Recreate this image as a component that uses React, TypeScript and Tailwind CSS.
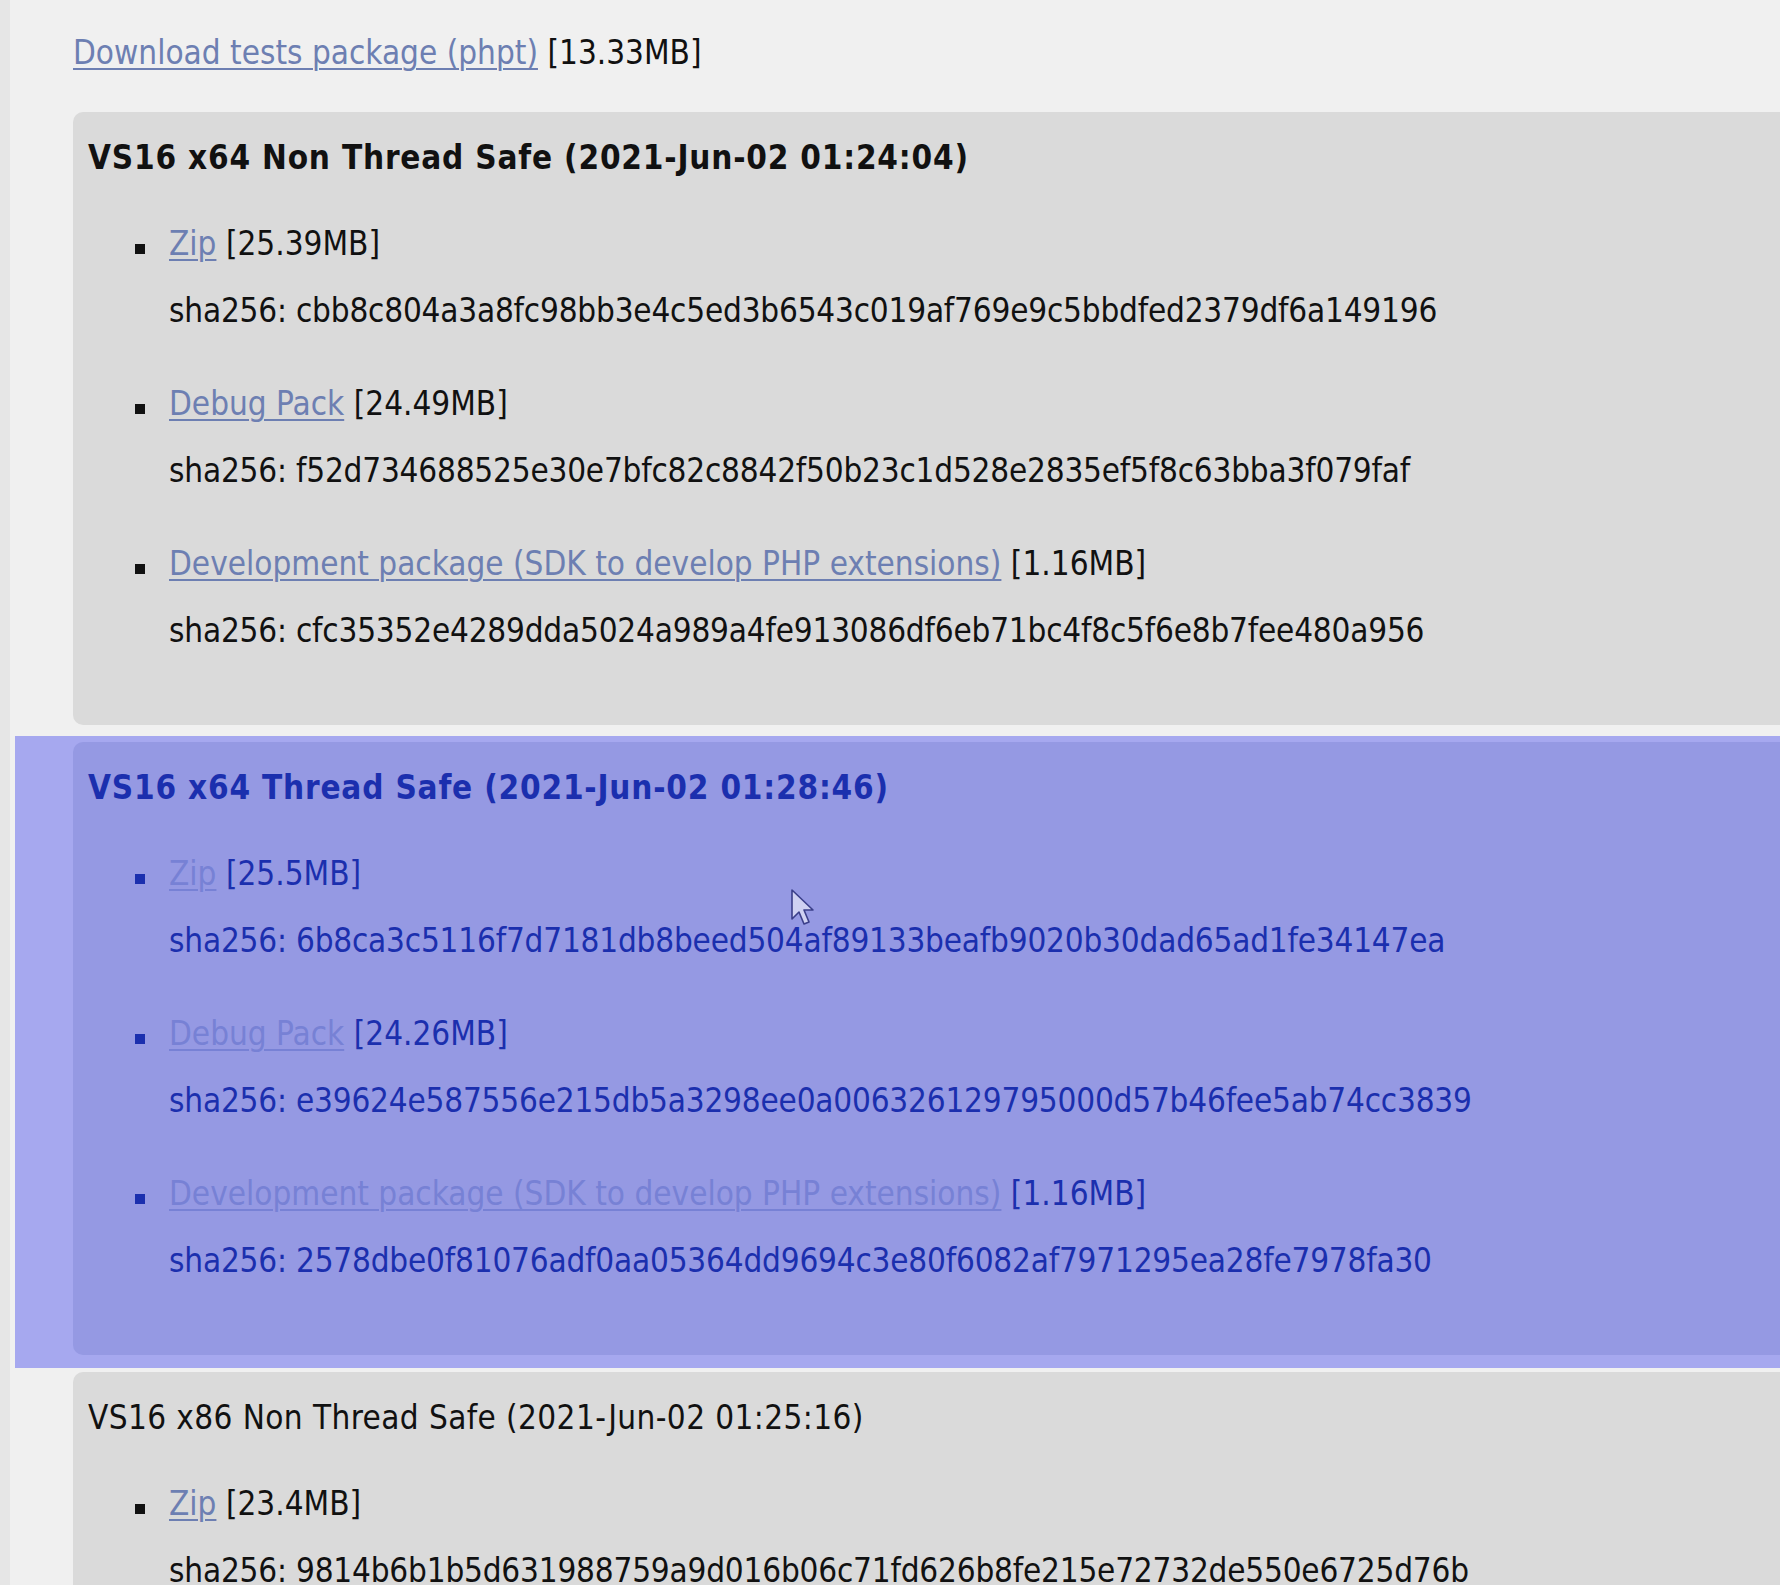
import React from "react";

type Item = { label: string; size: string; sha: string };
type Build = { title: string; bold: boolean; items: Item[] };

const builds: Build[] = [
  {
    title: "VS16 x64 Non Thread Safe (2021-Jun-02 01:24:04)",
    bold: true,
    items: [
      { label: "Zip", size: "[25.39MB]", sha: "cbb8c804a3a8fc98bb3e4c5ed3b6543c019af769e9c5bbdfed2379df6a149196" },
      { label: "Debug Pack", size: "[24.49MB]", sha: "f52d734688525e30e7bfc82c8842f50b23c1d528e2835ef5f8c63bba3f079faf" },
      {
        label: "Development package (SDK to develop PHP extensions)",
        size: "[1.16MB]",
        sha: "cfc35352e4289dda5024a989a4fe913086df6eb71bc4f8c5f6e8b7fee480a956",
      },
    ],
  },
  {
    title: "VS16 x64 Thread Safe (2021-Jun-02 01:28:46)",
    bold: true,
    items: [
      { label: "Zip", size: "[25.5MB]", sha: "6b8ca3c5116f7d7181db8beed504af89133beafb9020b30dad65ad1fe34147ea" },
      { label: "Debug Pack", size: "[24.26MB]", sha: "e39624e587556e215db5a3298ee0a006326129795000d57b46fee5ab74cc3839" },
      {
        label: "Development package (SDK to develop PHP extensions)",
        size: "[1.16MB]",
        sha: "2578dbe0f81076adf0aa05364dd9694c3e80f6082af7971295ea28fe7978fa30",
      },
    ],
  },
  {
    title: "VS16 x86 Non Thread Safe (2021-Jun-02 01:25:16)",
    bold: false,
    items: [
      { label: "Zip", size: "[23.4MB]", sha: "9814b6b1b5d631988759a9d016b06c71fd626b8fe215e72732de550e6725d76b" },
    ],
  },
];

function BuildBox({ b, hot }: { b: Build; hot: boolean }) {
  const text = hot ? "text-[#1b2fae]" : "text-[#111111]";
  const link = hot ? "text-[#7781d5] decoration-[#7781d5]" : "text-[#6d7fb2] decoration-[#6d7fb2]";
  const bullet = hot ? "bg-[#1b2fae]" : "bg-[#111111]";
  return (
    <div
      className={`rounded-l-[10px] pt-[26px] pb-[74px] ${hot ? "bg-[#9599e3]" : "bg-[#dadada]"} ${text}`}
    >
      <div
        className={`pl-[15px] h-[40px] leading-[40px] whitespace-nowrap ${
          b.bold ? "font-bold tracking-[0.8px]" : "font-normal tracking-[0.4px]"
        }`}
      >
        {b.title}
      </div>
      <div className="mt-[46px] flex flex-col gap-[53px]">
        {b.items.map((it) => (
          <div key={it.sha} className="flex">
            <span className={`ml-[62px] mr-[24px] mt-[20px] w-[10px] h-[10px] shrink-0 ${bullet}`} />
            <div className="flex flex-col gap-[27px] whitespace-nowrap">
              <div className="h-[40px] leading-[40px]">
                <a href="#" className={`underline underline-offset-[4px] decoration-[1.5px] ${link}`}>
                  {it.label}
                </a>{" "}
                {it.size}
              </div>
              <div className="h-[40px] leading-[40px] tracking-[-0.2px]">sha256: {it.sha}</div>
            </div>
          </div>
        ))}
      </div>
    </div>
  );
}

export default function App() {
  return (
    <div
      className="relative flex h-[1585px] w-full overflow-hidden bg-[#f0f0f0] text-[33px]"
      style={{ fontFamily: '"DejaVu Sans Condensed", "DejaVu Sans", sans-serif' }}
    >
      <div className="w-[10px] shrink-0 bg-[#e6e6e6]" />
      <div className="flex-1 min-w-0">
        <div className="mt-[33px] h-[40px] pl-[63px] leading-[40px] text-[#111111] whitespace-nowrap">
          <a href="#" className="underline underline-offset-[4px] decoration-[1.5px] text-[#6d7fb2] decoration-[#6d7fb2]">
            Download tests package (phpt)
          </a>{" "}
          [13.33MB]
        </div>
        <div className="mt-[39px] pl-[63px]">
          <BuildBox b={builds[0]} hot={false} />
        </div>
        <div className="mt-[11px] ml-[5px] bg-[#a6a8ef] pl-[58px] pt-[6px] pb-[13px]">
          <BuildBox b={builds[1]} hot={true} />
        </div>
        <div className="mt-[4px] pl-[63px]">
          <BuildBox b={builds[2]} hot={false} />
        </div>
      </div>
      <div className="absolute left-[791px] top-[889px]">
        <svg width="24" height="38" viewBox="0 0 24 38">
          <path
            d="M1 1 L1 30 L8 23 L13 35 L18 33 L13 21 L22 21 Z"
            fill="#ffffff"
            fillOpacity="0.55"
            stroke="#3b3f8a"
            strokeWidth="1.6"
            strokeLinejoin="round"
          />
        </svg>
      </div>
    </div>
  );
}
